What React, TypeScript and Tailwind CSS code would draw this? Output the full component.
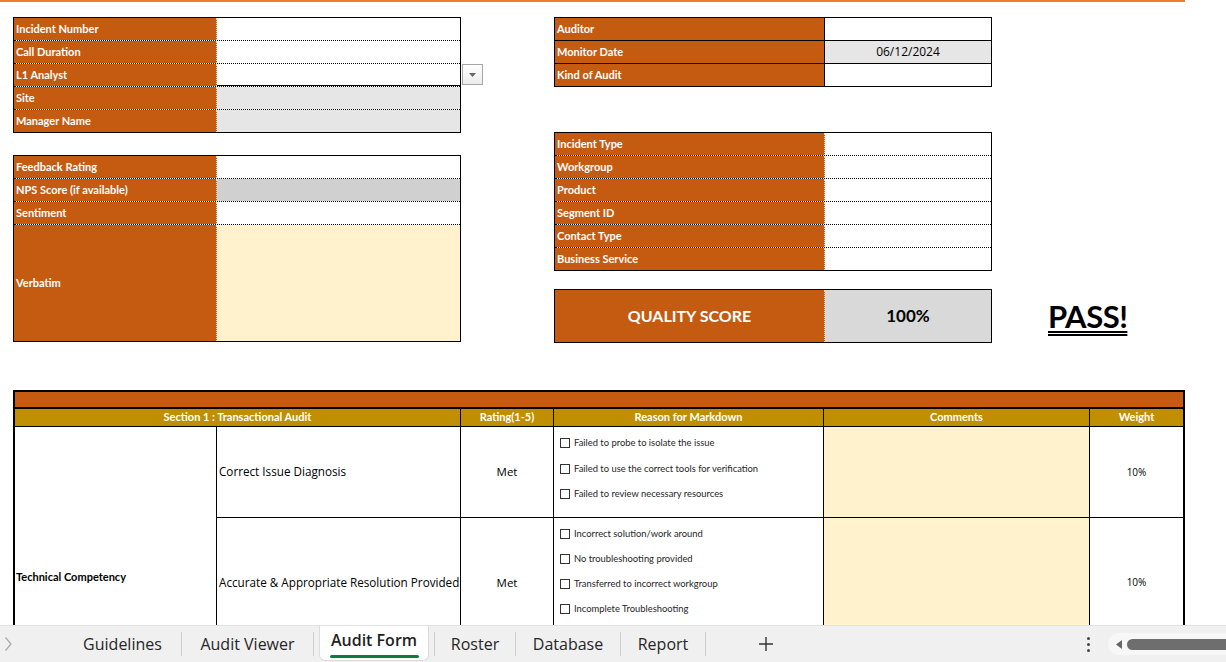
import * as React from "react";

const ORANGE = "bg-[#c55a11]";
const BODY = { fontFamily: "'Open Sans', 'Noto Sans', sans-serif" };

function LabelRow({
  label,
  valueClass = "bg-white",
  h = "h-[23px]",
  last = false,
  solid = false,
  value,
  valueBorder,
}: {
  label: string;
  valueClass?: string;
  h?: string;
  last?: boolean;
  solid?: boolean;
  value?: string;
  valueBorder?: string;
}) {
  const line = last ? "" : solid ? "border-b border-black" : "border-b border-dotted border-black";
  return (
    <div className={`flex ${h} ${line}`}>
      <div
        className={`${ORANGE} flex items-center pl-[2px] text-[11px] font-bold text-white ${
          solid ? "border-r border-black" : "border-r border-dotted border-[#f3d9c6]"
        }`}
        style={{ width: "var(--lw)" }}
      >
        {label}
      </div>
      <div
        className={`flex-1 flex items-center justify-center text-[12px] text-black ${valueClass} ${valueBorder ?? ""}`}
        style={BODY}
      >
        {value}
      </div>
    </div>
  );
}

function Check({ text }: { text: string }) {
  return (
    <div className="flex items-center gap-[4px] h-[12px]">
      <span className="w-[10px] h-[10px] border border-[#333] bg-white shrink-0" />
      <span className="text-[9.4px] text-[#262626] leading-none whitespace-nowrap">{text}</span>
    </div>
  );
}

function TabSep() {
  return <div className="w-px h-[24px] bg-[#cfcfcf] shrink-0" />;
}

export default function App() {
  return (
    <div
      className="w-[1226px] h-[662px] flex flex-col overflow-hidden bg-white"
      style={{ fontFamily: "Lato, 'Noto Sans', sans-serif" }}
    >
      {/* sheet area */}
      <div className="flex-1 min-h-0 overflow-hidden">
        <div className="h-[2px] w-[1185px] bg-[#ed7d31]" />

        <div className="flex pl-[13px] pt-[15px] gap-[93px]">
          {/* left column */}
          <div className="w-[448px] flex flex-col" style={{ ["--lw" as string]: "203px" }}>
            <div className="relative border border-black">
              <LabelRow label="Incident Number" />
              <LabelRow label="Call Duration" />
              <LabelRow label="L1 Analyst" valueBorder="border-b border-black" />
              <LabelRow label="Site" valueClass="bg-[#e6e6e6]" />
              <LabelRow label="Manager Name" valueClass="bg-[#e6e6e6]" h="h-[22px]" last />
              <div className="absolute left-[448px] top-[46px] w-[21px] h-[21px] border border-[#a6a6a6] bg-gradient-to-b from-white to-[#ececec] flex items-center justify-center">
                <svg width="7" height="4" viewBox="0 0 7 4">
                  <path d="M0 0 H7 L3.5 4 Z" fill="#666" />
                </svg>
              </div>
            </div>

            <div className="mt-[22px] border border-black">
              <LabelRow label="Feedback Rating" />
              <LabelRow label="NPS Score (if available)" valueClass="bg-[#d0d0d0]" />
              <LabelRow label="Sentiment" />
              <LabelRow label="Verbatim" valueClass="bg-[#fff2cc]" h="h-[116px]" last />
            </div>
          </div>

          {/* right column */}
          <div className="flex flex-col" style={{ ["--lw" as string]: "270px" }}>
            <div className="w-[438px] border border-black">
              <LabelRow label="Auditor" solid />
              <LabelRow label="Monitor Date" solid valueClass="bg-[#e7e6e6]" value="06/12/2024" />
              <LabelRow label="Kind of Audit" solid last h="h-[22px]" />
            </div>

            <div className="mt-[45px] w-[438px] border border-black">
              <LabelRow label="Incident Type" />
              <LabelRow label="Workgroup" />
              <LabelRow label="Product" />
              <LabelRow label="Segment ID" />
              <LabelRow label="Contact Type" />
              <LabelRow label="Business Service" h="h-[22px]" last />
            </div>

            <div className="mt-[18px] flex items-center">
              <div className="w-[438px] h-[54px] border border-black flex">
                <div className="w-[270px] bg-[#c55a11] border-r border-dotted border-[#f3d9c6] flex items-center justify-center text-[16px] font-bold text-white">
                  QUALITY SCORE
                </div>
                <div className="flex-1 bg-[#d9d9d9] flex items-center justify-center text-[17px] font-bold text-black">
                  100%
                </div>
              </div>
              <div className="ml-[56px] text-[31px] font-bold text-black underline decoration-double decoration-[1.5px] underline-offset-[3px] leading-none tracking-[-0.5px]">
                PASS!
              </div>
            </div>
          </div>
        </div>

        {/* main audit table */}
        <div className="ml-[13px] mt-[47px] w-[1172px] border-2 border-black">
          <div className="h-[17px] bg-[#c55a11] border-b-2 border-black" />
          <div className="grid grid-cols-[446px_93px_270px_266px_93px] h-[18px] bg-[#bf8f00] border-b border-black text-[11px] font-bold text-white">
            <div className="flex items-center justify-center border-r border-black">Section 1 : Transactional Audit</div>
            <div className="flex items-center justify-center border-r border-black">Rating(1-5)</div>
            <div className="flex items-center justify-center border-r border-black">Reason for Markdown</div>
            <div className="flex items-center justify-center border-r border-black">Comments</div>
            <div className="flex items-center justify-center">Weight</div>
          </div>

          <div className="grid grid-cols-[202px_244px_93px_270px_266px_93px] grid-rows-[91px_130px_79px]">
            <div className="row-span-3 border-r border-black flex items-center pl-[1px] text-[11px] font-bold text-black">
              Technical Competency
            </div>

            {/* row 1 */}
            <div className="border-r border-b border-black flex items-center pl-[2px] text-[11.7px] text-black" style={BODY}>
              Correct Issue Diagnosis
            </div>
            <div className="border-r border-b border-black flex items-center justify-center text-[11.5px] text-black" style={BODY}>Met</div>
            <div className="border-r border-b border-black flex flex-col pl-[6px] pt-[10px] gap-[13.5px]">
              <Check text="Failed to probe to isolate the issue" />
              <Check text="Failed to use the correct tools for verification" />
              <Check text="Failed to review necessary resources" />
            </div>
            <div className="border-r border-b border-black bg-[#fff2cc]" />
            <div className="border-b border-black flex items-center justify-center text-[10px] text-black" style={BODY}>10%</div>

            {/* row 2 */}
            <div className="border-r border-b border-black flex items-center pl-[2px] text-[11.7px] text-black whitespace-nowrap" style={BODY}>
              Accurate &amp; Appropriate Resolution Provided
            </div>
            <div className="border-r border-b border-black flex items-center justify-center text-[11.5px] text-black" style={BODY}>Met</div>
            <div className="border-r border-b border-black flex flex-col pl-[6px] pt-[10px] gap-[13px]">
              <Check text="Incorrect solution/work around" />
              <Check text="No troubleshooting provided" />
              <Check text="Transferred to incorrect workgroup" />
              <Check text="Incomplete Troubleshooting" />
            </div>
            <div className="border-r border-b border-black bg-[#fff2cc]" />
            <div className="border-b border-black flex items-center justify-center text-[10px] text-black" style={BODY}>10%</div>

            {/* row 3 */}
            <div className="border-r border-black" />
            <div className="border-r border-black" />
            <div className="border-r border-black" />
            <div className="border-r border-black bg-[#fff2cc]" />
            <div />
          </div>
        </div>
      </div>

      {/* sheet tabs */}
      <div
        className="h-[37px] shrink-0 bg-[#f0f0f0] border-t border-[#e2e2e2] flex items-stretch text-[16px] text-[#262626]"
        style={BODY}
      >
        <div className="w-[64px] flex items-center pl-[4px]">
          <svg width="9" height="16" viewBox="0 0 9 16">
            <path d="M1.5 1.5 L7 8 L1.5 14.5" fill="none" stroke="#a8a8a8" strokeWidth="1.2" />
          </svg>
        </div>
        <div className="w-[117px] flex items-center justify-center">Guidelines</div>
        <div className="flex items-center"><TabSep /></div>
        <div className="w-[131px] flex items-center justify-center">Audit Viewer</div>
        <div className="flex items-center"><TabSep /></div>
        <div className="w-[5px]" />
        <div className="w-[110px] mb-[1px] bg-white border border-t-0 border-[#dcdcdc] rounded-b-[6px] flex flex-col items-center justify-center">
          <span className="font-semibold text-[#1f1f1f] leading-none mt-[4px]">Audit Form</span>
          <span className="mt-[7px] h-[3px] w-[89px] rounded-full bg-[#107c41]" />
        </div>
        <div className="w-[5px]" />
        <div className="flex items-center"><TabSep /></div>
        <div className="w-[80px] flex items-center justify-center">Roster</div>
        <div className="flex items-center"><TabSep /></div>
        <div className="w-[104px] flex items-center justify-center">Database</div>
        <div className="flex items-center"><TabSep /></div>
        <div className="w-[84px] flex items-center justify-center">Report</div>
        <div className="flex items-center"><TabSep /></div>
        <div className="w-[120px] flex items-center justify-center">
          <svg width="16" height="16" viewBox="0 0 16 16">
            <path d="M8 1 V15 M1 8 H15" stroke="#333" strokeWidth="1.4" />
          </svg>
        </div>
        <div className="flex-1" />
        <div className="w-[20px] flex flex-col items-center justify-center gap-[3px]">
          <span className="w-[3px] h-[3px] rounded-full bg-[#444]" />
          <span className="w-[3px] h-[3px] rounded-full bg-[#444]" />
          <span className="w-[3px] h-[3px] rounded-full bg-[#444]" />
        </div>
        <div className="w-[10px]" />
        <div className="w-[118px] my-[7px] bg-[#f7f7f7] rounded-l-full flex items-center pl-[8px] gap-[5px]">
          <svg width="6" height="9" viewBox="0 0 6 9">
            <path d="M6 0 V9 L0 4.5 Z" fill="#666" />
          </svg>
          <div className="flex-1 h-[11px] bg-[#6e6e6e] rounded-l-full" />
        </div>
      </div>
    </div>
  );
}
